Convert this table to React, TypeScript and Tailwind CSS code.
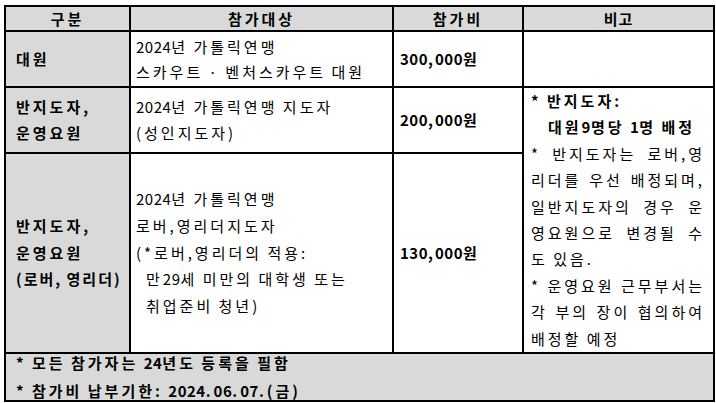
import React from "react";

// digits get almost no extra spacing, hangul gets wide spacing (like the HWP original)
function T({ s }: { s: string }) {
  return (
    <>
      {s.split(/([0-9]+)/).map((p, i) =>
        /^[0-9]+$/.test(p) ? (
          <span key={i} className="tracking-[0.5px]">
            {p}
          </span>
        ) : (
          <React.Fragment key={i}>{p}</React.Fragment>
        )
      )}
    </>
  );
}

function Line({ s, className = "" }: { s: string; className?: string }) {
  return (
    <div className={`whitespace-nowrap ${className}`}>
      <T s={s} />
    </div>
  );
}

function JLine({ s, bold = false }: { s: string; bold?: boolean }) {
  return (
    <div
      className={`text-justify [text-align-last:justify] whitespace-nowrap ${
        bold ? "font-bold" : ""
      }`}
    >
      <T s={s} />
    </div>
  );
}

export default function App() {
  return (
    <div className="w-[716px] h-[403px] bg-white pt-[5px] pl-[4px] font-['Noto_Sans_CJK_KR',sans-serif] text-[15px] text-black tracking-[3px] [word-spacing:-1px]">
      <table className="table-fixed border-collapse w-[709px] border-2 border-black">
        <colgroup>
          <col className="w-[125px]" />
          <col className="w-[263px]" />
          <col className="w-[130px]" />
          <col className="w-[191px]" />
        </colgroup>
        <tbody>
          {/* header */}
          <tr className="h-[25px] bg-[#d9d9d9] font-bold">
            <td className="border-2 border-black text-center leading-[20px] p-0">구분</td>
            <td className="border-2 border-black text-center leading-[20px] p-0">참가대상</td>
            <td className="border-2 border-black text-center leading-[20px] p-0">참가비</td>
            <td className="border-2 border-black text-center leading-[20px] p-0 tracking-[1px]">비고</td>
          </tr>

          {/* 대원 */}
          <tr className="h-[56px]">
            <td className="border-2 border-black bg-[#d9d9d9] font-bold pl-[10px] align-middle leading-[26px]">
              대원
            </td>
            <td className="border-2 border-black pl-[5px] align-middle leading-[25px]">
              <Line s="2024년 가톨릭연맹" />
              <Line s="스카우트 · 벤처스카우트 대원" />
            </td>
            <td className="border-2 border-black pl-[6px] font-bold align-middle">
              <Line s="300,000원" className="tracking-[2px]" />
            </td>
            <td className="border-2 border-black"></td>
          </tr>

          {/* 반지도자, 운영요원 */}
          <tr className="h-[66px]">
            <td className="border-2 border-black bg-[#d9d9d9] font-bold pl-[10px] align-middle leading-[26px]">
              <Line s="반지도자," />
              <Line s="운영요원" />
            </td>
            <td className="border-2 border-black pl-[5px] align-middle leading-[26px]">
              <Line s="2024년 가톨릭연맹 지도자" />
              <Line s="(성인지도자)" />
            </td>
            <td className="border-2 border-black pl-[6px] font-bold align-middle">
              <Line s="200,000원" className="tracking-[2px]" />
            </td>
            <td
              rowSpan={2}
              className="border-2 border-black pl-[7px] pr-[8px] py-0 align-middle leading-[26.4px]"
            >
              <Line s="* 반지도자:" className="font-bold" />
              <Line s="대원9명당 1명 배정" className="font-bold pl-[17px]" />
              <JLine s="* 반지도자는 로버,영" />
              <JLine s="리더를 우선 배정되며," />
              <JLine s="일반지도자의 경우 운" />
              <JLine s="영요원으로 변경될 수" />
              <Line s="도 있음." />
              <JLine s="* 운영요원 근무부서는" />
              <JLine s="각 부의 장이 협의하여" />
              <Line s="배정할 예정" />
            </td>
          </tr>

          {/* 로버, 영리더 */}
          <tr className="h-[200px]">
            <td className="border-2 border-black bg-[#d9d9d9] font-bold pl-[10px] align-middle leading-[26.5px]">
              <Line s="반지도자," />
              <Line s="운영요원" />
              <Line s="(로버, 영리더)" className="tracking-[2px]" />
            </td>
            <td className="border-2 border-black pl-[5px] align-middle leading-[26.7px]">
              <Line s="2024년 가톨릭연맹" />
              <Line s="로버,영리더지도자" />
              <Line s="(*로버,영리더의 적용:" />
              <Line s="만29세 미만의 대학생 또는" className="pl-[10px]" />
              <Line s="취업준비 청년)" className="pl-[10px]" />
            </td>
            <td className="border-2 border-black pl-[6px] font-bold align-middle">
              <Line s="130,000원" className="tracking-[2px]" />
            </td>
          </tr>

          {/* footer */}
          <tr className="h-[47px] bg-[#d9d9d9]">
            <td colSpan={4} className="border-2 border-black py-0 pl-[10px] align-middle font-bold">
              <div className="flex flex-col gap-[10px] leading-[18px]">
                <Line s="* 모든 참가자는 24년도 등록을 필함" />
                <Line s="* 참가비 납부기한: 2024.06.07.(금)" />
              </div>
            </td>
          </tr>
        </tbody>
      </table>
    </div>
  );
}
